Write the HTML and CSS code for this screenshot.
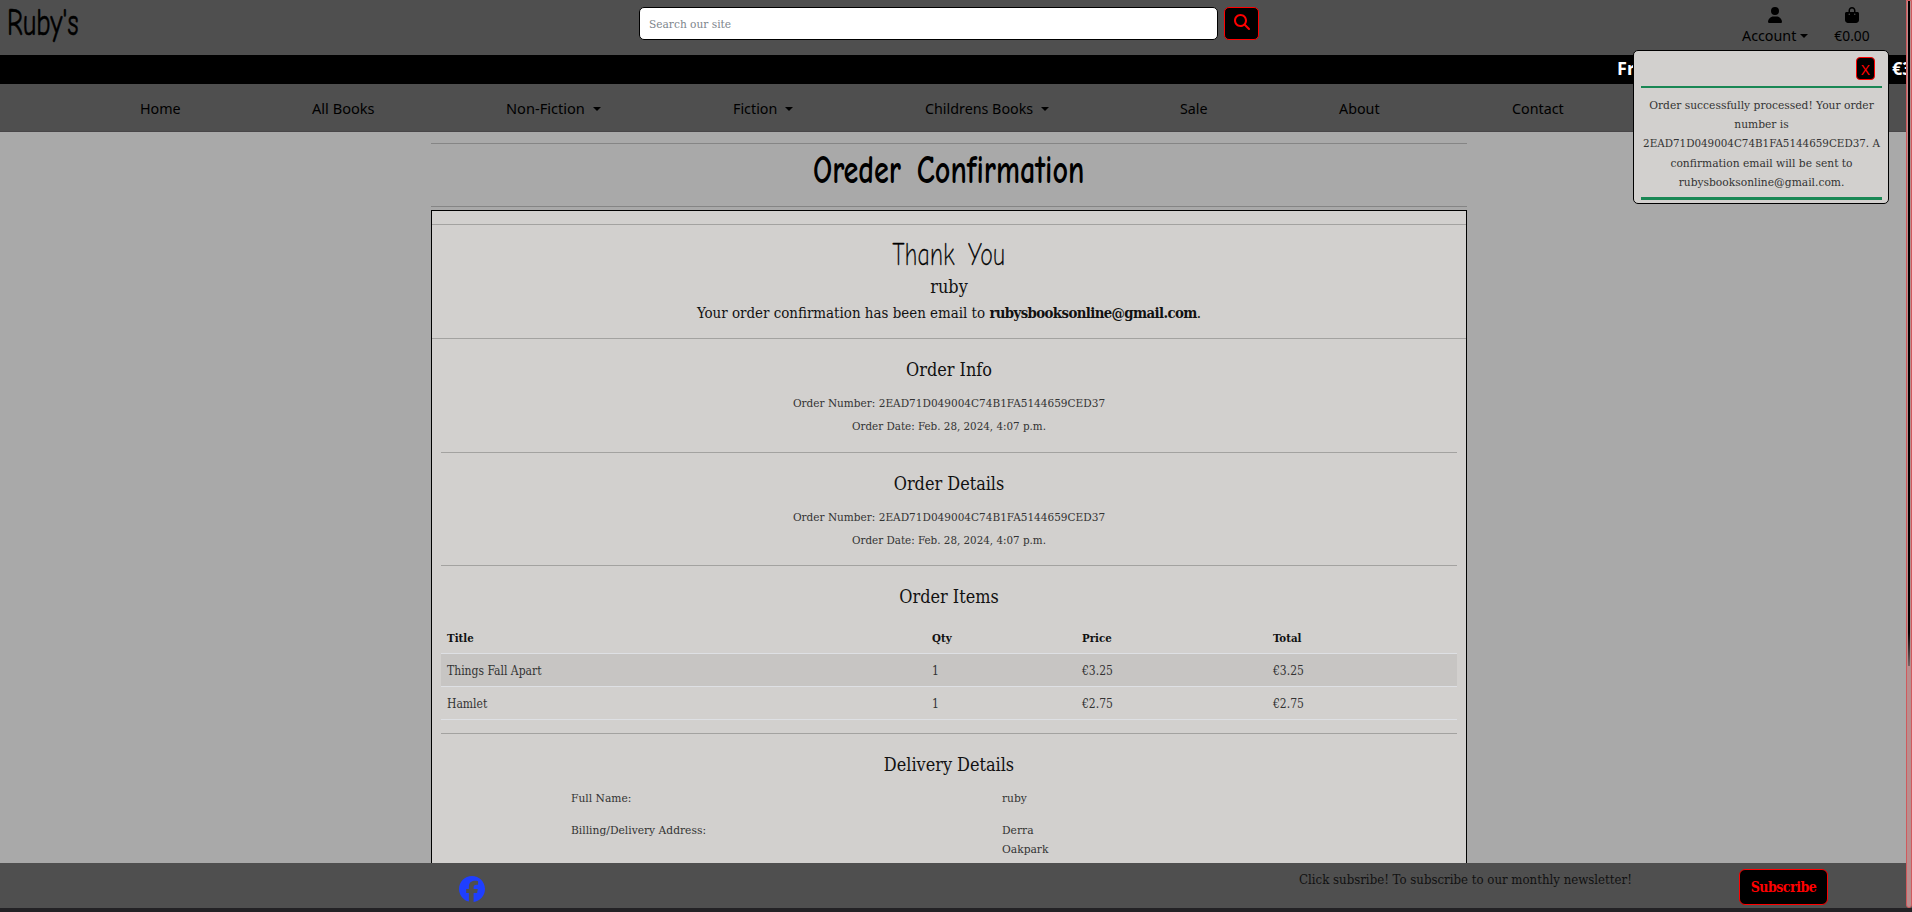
FILE: index.html
```
<!DOCTYPE html>
<html lang="en">
<head>
<meta charset="utf-8">
<title>Ruby's - Order Confirmation</title>
<link rel="stylesheet" href="styles.css">
</head>
<body>
<div class="page">
  <header class="topbar">
    <a class="logo"><span class="hand">Ruby's</span></a>
    <form class="search">
      <input class="search-input" type="text" placeholder="Search our site">
      <button class="search-btn" type="button" aria-label="Search">
        <svg width="16" height="16" viewBox="0 0 512 512"><path fill="#f00" d="M416 208c0 45.900-14.900 88.300-40 122.700L502.600 457.400c12.500 12.500 12.500 32.800 0 45.300s-32.800 12.500-45.300 0L330.700 376c-34.400 25.200-76.800 40-122.700 40C93.100 416 0 322.900 0 208S93.100 0 208 0S416 93.100 416 208zM208 352a144 144 0 1 0 0-288 144 144 0 1 0 0 288z"/></svg>
      </button>
    </form>
    <div class="user-links">
      <a class="user-link account">
        <svg width="14" height="16" viewBox="0 0 448 512"><path d="M224 256A128 128 0 1 0 224 0a128 128 0 1 0 0 256zm-45.700 48C79.800 304 0 383.800 0 482.300C0 498.700 13.300 512 29.700 512H418.300c16.400 0 29.700-13.300 29.700-29.700C448 383.800 368.200 304 269.700 304H178.300z"/></svg>
        <span class="caret-label">Account<i class="caret"></i></span>
      </a>
      <a class="user-link bag">
        <svg width="14" height="16" viewBox="0 0 448 512"><path d="M160 112c0-35.300 28.700-64 64-64s64 28.700 64 64v48H160V112zm-48 48H48c-26.500 0-48 21.500-48 48V416c0 53 43 96 96 96H352c53 0 96-43 96-96V208c0-26.500-21.500-48-48-48H336V112C336 50.100 285.900 0 224 0S112 50.100 112 112v48zm24 48a24 24 0 1 1 0 48 24 24 0 1 1 0-48zm152 24a24 24 0 1 1 48 0 24 24 0 1 1-48 0z"/></svg>
        <span>€0.00</span>
      </a>
    </div>
  </header>
  <div class="ticker"><span class="ticker-start">Fr</span><span class="ticker-end">€3</span></div>
  <nav class="nav">
    <a class="w-home">Home</a>
    <a class="w-all">All Books</a>
    <a class="w-non">Non-Fiction<i class="caret"></i></a>
    <a class="w-fic">Fiction<i class="caret"></i></a>
    <a class="w-child">Childrens Books<i class="caret"></i></a>
    <a class="w-sale">Sale</a>
    <a class="w-about">About</a>
    <a class="w-contact">Contact</a>
  </nav>
  <main class="main">
    <div class="heading"><h1 class="hand">Oreder Confirmation</h1></div>
    <section class="card">
      <div class="thanks">
        <h2 class="hand">Thank You</h2>
        <p class="name">ruby</p>
        <p class="sent">Your order confirmation has been email to <b>rubysbooksonline@gmail.com</b>.</p>
      </div>
      <div class="body">
        <div class="block info">
          <h3>Order Info</h3>
          <p class="number">Order Number: 2EAD71D049004C74B1FA5144659CED37</p>
          <p class="date">Order Date: Feb. 28, 2024, 4:07 p.m.</p>
        </div>
        <div class="block details">
          <h3>Order Details</h3>
          <p class="number">Order Number: 2EAD71D049004C74B1FA5144659CED37</p>
          <p class="date">Order Date: Feb. 28, 2024, 4:07 p.m.</p>
        </div>
        <div class="block items">
          <h3>Order Items</h3>
          <div class="table">
            <div class="row head"><span>Title</span><span>Qty</span><span>Price</span><span>Total</span></div>
            <div class="row odd"><span>Things Fall Apart</span><span>1</span><span>€3.25</span><span>€3.25</span></div>
            <div class="row"><span>Hamlet</span><span>1</span><span>€2.75</span><span>€2.75</span></div>
          </div>
        </div>
        <div class="block delivery">
          <h3>Delivery Details</h3>
          <div class="pair"><span>Full Name:</span><span>ruby</span></div>
          <div class="pair"><span>Billing/Delivery Address:</span><span>Derra<br>Oakpark</span></div>
        </div>
      </div>
    </section>
  </main>
  <footer class="footer">
    <svg class="facebook" width="26" height="26" viewBox="0 0 512 512"><path fill="#1f3fff" d="M512 256C512 114.600 397.400 0 256 0S0 114.600 0 256C0 376 82.700 476.800 194.200 504.500V334.200H141.400V256h52.800V222.300c0-87.100 39.400-127.500 125-127.500c16.200 0 44.200 3.200 55.700 6.400V172c-6-.6-16.500-1-29.600-1c-42 0-58.200 15.900-58.200 57.200V256h83.600l-14.400 78.200H287V510.100C413.800 494.800 512 386.900 512 256z"/></svg>
    <p class="footer-note">Click subsribe! To subscribe to our monthly newsletter!</p>
    <button class="subscribe" type="button">Subscribe</button>
  </footer>
</div>
<aside class="toast">
  <div class="toast-head"><button class="close" type="button">X</button></div>
  <p class="toast-body">Order successfully processed! Your order<br>number is<br><span class="code">2EAD71D049004C74B1FA5144659CED37. A</span><br>confirmation email will be sent to<br>rubysbooksonline@gmail.com.</p>
</aside>
<div class="scrollbar"><div class="thumb"></div></div>
</body>
</html>
```
FILE: styles.css
```
* { box-sizing: border-box; }
body {
  margin: 0;
  height: 912px;
  overflow: hidden;
  background: #a9a9a9;
  color: #333;
  font-family: "DejaVu Serif Condensed", "DejaVu Serif", serif;
  font-size: 11.7px;
}
h1, h2, h3, p { margin: 0; font-weight: 400; }
button { padding: 0; font-family: inherit; }
.hand { display: inline-block; font-family: "Comic Neue", Lato, sans-serif; color: #000; white-space: nowrap; }
.page { display: flex; flex-direction: column; height: 912px; width: 1906px; }

.topbar { flex: none; display: flex; height: 55px; background: #4f4f4f; color: #000; }
.logo { width: 639px; padding-left: 7px; }
.logo .hand { font-size: 39px; line-height: 45px; font-weight: 400; transform: scaleX(.68); transform-origin: 0 50%; -webkit-text-stroke: .6px #000; }
.search { display: flex; gap: 6px; width: 620px; height: 34px; margin-top: 7px; }
.search-input {
  width: 579px; height: 33px; padding: 0 9px; border: 1px solid #000; border-radius: 5px;
  background: #fff; font-family: inherit; font-size: 11.8px;
}
.search-input::placeholder { color: #7d858c; opacity: 1; }
.search-btn { width: 35px; height: 33px; border: 1px solid #f00; border-radius: 5px; background: #000; padding-bottom: 3px; }
.search-btn svg { vertical-align: middle; }
.user-links { display: flex; margin-left: 483px; gap: 26px; font: 14.3px/20px "Noto Sans", sans-serif; }
.user-link { display: flex; flex-direction: column; align-items: center; padding-top: 7px; gap: 3px; }
.caret-label { white-space: nowrap; }
.bag { font-size: 13.8px; }
.caret { display: inline-block; border: 4px solid transparent; border-top-color: #000; border-bottom: 0; vertical-align: 3px; margin-left: 4px; }

.ticker { flex: none; display: flex; height: 29px; background: #000; color: #fff; overflow: hidden; padding-left: 1617px; font: 700 18px/26px "Noto Sans", sans-serif; white-space: nowrap; }
.ticker-start { flex: none; width: 275px; }
.nav {
  flex: none; display: flex; gap: 132px; height: 48px; padding-left: 140px; background: #4f4f4f;
  border-bottom: 1px solid #484648; color: #000; font: 14.3px/49px "Noto Sans", sans-serif; white-space: nowrap;
}
.nav a { flex: none; }
.nav .caret { margin-left: 8px; }
.w-home { width: 40px; }
.w-all { width: 62px; font-size: 14.6px; }
.w-non { width: 95px; font-size: 14.6px; }
.w-fic { width: 60px; }
.w-child { width: 123px; }
.w-sale { width: 27px; }
.w-about { width: 41px; }
.w-contact { width: 52px; }

.main { flex: 1; min-height: 0; overflow: hidden; width: 1036px; margin-left: 431px; padding-top: 11px; }
.heading { height: 64px; border-top: 1px solid #858585; border-bottom: 1px solid #858585; text-align: center; }
h1.hand { font-size: 41px; line-height: 52px; font-weight: 700; word-spacing: 7px; transform: scaleX(.735); }
.card { height: 900px; margin-top: 3px; border: 1px solid #000; background: #d2d0ce; }
.thanks { height: 115px; margin-top: 13px; border-top: 1px solid #a3a2a0; border-bottom: 1px solid #a3a2a0; text-align: center; color: #111; }
h2.hand { display: block; height: 50px; font-size: 32px; line-height: 59px; font-weight: 300; word-spacing: 8px; transform: scaleX(.73); -webkit-text-stroke: .3px #000; }
.name { font-size: 17.9px; line-height: 24px; }
.sent { font-size: 14.95px; line-height: 28px; color: #111; white-space: nowrap; }
.sent b { font-size: 14.8px; letter-spacing: -.6px; }
.body { padding: 0 9px; }
.block { text-align: center; border-bottom: 1px solid #a3a2a0; padding-top: 17px; }
h3 { font-size: 17.9px; line-height: 27px; color: #111; }
.info { height: 114px; }
.details { height: 113px; }
.number { margin-top: 9px; line-height: 23px; font-size: 11.7px; }
.date { line-height: 23px; font-size: 11.51px; }
.details .date { line-height: 22px; }
.items { height: 168px; }
.table { margin-top: 11px; text-align: left; }
.row { display: grid; grid-template-columns: 485px 150px 191px 1fr; height: 33px; padding-left: 6px; line-height: 34px; border-bottom: 1px solid #dee0e4; font-size: 12px; }
.head { font-weight: 700; font-size: 11.4px; color: #111; line-height: 34px; }
.odd { background: #c7c5c3; }
.delivery { border: 0; }
.delivery h3 { margin-bottom: 5px; }
.pair { display: grid; grid-template-columns: 431px 1fr; padding: 6px 0 7px 130px; text-align: left; line-height: 19px; font-size: 11.9px; }

.footer { flex: none; display: flex; width: 1912px; height: 49px; background: #4f4f4f; border-bottom: 4px solid #232225; padding-left: 459px; color: #111; }
.facebook { margin-top: 13px; }
.footer-note { width: 440px; margin-left: 814px; font-size: 13.1px; line-height: 33px; white-space: nowrap; }
.subscribe { width: 89px; height: 36px; margin-top: 6px; border: 1px solid #f00; border-radius: 6px; background: #000; color: #f00; font-size: 14px; font-weight: 700; letter-spacing: -.5px; }

.toast {
  position: absolute; left: 1633px; top: 50px; width: 256px; height: 154px; padding: 5px 6px 0 7px;
  border: 1px solid #000; border-radius: 5px; background: #d2d0ce; text-align: center;
}
.toast-head { height: 32px; border-bottom: 2px solid #198754; text-align: right; padding-right: 7px; }
.close { width: 19px; height: 23px; margin-top: 1px; border: 1px solid #f00; border-radius: 4px; background: #000; color: #f00; font: 15px/20px "Noto Sans", sans-serif; }
.toast-body { margin: 0; padding: 8px 0 5px; border-bottom: 3px solid #198754; font-size: 11.9px; line-height: 19.2px; white-space: nowrap; }
.code { font-size: 11.5px; }
.scrollbar { position: absolute; left: 1906px; top: 0; width: 6px; height: 908px; background: #b98e8e; border: 1px solid #d0595c; border-radius: 0 0 3px 3px; }
.thumb { width: 2px; height: 665px; margin: 0 auto; background: linear-gradient(#000 95%, #766 100%); }
```
